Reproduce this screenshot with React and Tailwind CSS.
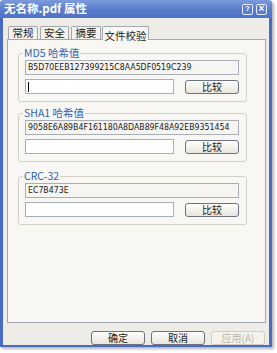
import React from 'react';

const cjk = { fontFamily: '"Noto Sans CJK SC", "Liberation Sans", sans-serif' };
const latin = { fontFamily: '"Liberation Sans", "Noto Sans CJK SC", sans-serif' };
const narrow = { fontFamily: '"Liberation Sans Narrow", "DejaVu Sans Condensed", "Liberation Sans", sans-serif' };

function HashField({ value, white, caret }) {
    return (
        <div
            className={`h-[15px] min-w-0 border border-[#A7AEB8] flex items-center pl-[2px] text-[8.7px] text-[#1a1a1a] overflow-hidden whitespace-nowrap ${white ? 'bg-white' : 'bg-[#F6F5F1]'}`}
            style={narrow}
        >
            {caret && <span className="w-px h-[10px] bg-black" />}
            {value}
        </div>
    );
}

function XpButton({ children, disabled, className = '' }) {
    return (
        <div
            className={`h-[14px] w-[54px] shrink-0 rounded-[3px] border flex items-center justify-center text-[10px] leading-none ${disabled
                ? 'border-[#CFCDC2] bg-[#F4F3EE] text-[#B9B6AA]'
                : 'border-[#6B7280] bg-gradient-to-b from-white to-[#E7E5DC] text-[#222]'} ${className}`}
            style={cjk}
        >
            {children}
        </div>
    );
}

function HashGroup({ label, value, className = '' }) {
    return (
        <fieldset className={`min-w-0 w-full border border-[#D3D1C6] rounded-[3px] pl-[6px] pr-[7px] pb-[7px] ${className}`}>
            <legend className="ml-[-2px] px-[1px] text-[10.5px] leading-[12px] text-[#3463B5]" style={cjk}>
                {label}
            </legend>
            <div className="pt-[1px] flex flex-col gap-[4px]">
                <HashField value={value} />
                <div className="flex items-center justify-between">
                    <div className="w-[149px]">
                        <HashField white caret={label.startsWith('MD5')} />
                    </div>
                    <XpButton>比较</XpButton>
                </div>
            </div>
        </fieldset>
    );
}

export default function App() {
    return (
        <div className="w-[277px] h-[353px] bg-white">
            <div className="w-[272px] h-[347px] flex flex-col rounded-t-[3px] overflow-hidden shadow-[2px_2px_3px_rgba(0,0,0,0.3)]">
                {/* Title bar */}
                <div className="h-[18px] shrink-0 bg-gradient-to-b from-[#7C9BDB] via-[#5B7FCC] to-[#4F73C5] flex items-center justify-between pl-[4px] pr-[5px]">
                    <span className="text-white font-bold text-[11.5px] leading-none" style={cjk}>无名称.pdf 属性</span>
                    <div className="flex gap-[3px]">
                        <div className="w-[11px] h-[11px] rounded-[2px] border border-[#E6ECF8] bg-[#5A80D2] flex items-center justify-center text-white text-[8px] font-bold leading-none" style={latin}>?</div>
                        <div className="w-[11px] h-[11px] rounded-[2px] border border-[#E6ECF8] bg-[#5A80D2] flex items-center justify-center text-white text-[10px] font-bold leading-none" style={latin}>×</div>
                    </div>
                </div>

                {/* Body */}
                <div className="flex-1 bg-[#EDECE6] border-x-[3px] border-b-[3px] border-[#4A6BC4] flex flex-col pl-[4px] pr-[3px]">
                    {/* Tabs */}
                    <div className="h-[17px] mt-[4px] flex items-end pl-[1px] text-[10.5px] text-[#222]" style={cjk}>
                        <div className="w-[30px] h-[13px] border border-b-0 border-[#A3A8B0] rounded-t-[2px] bg-[#F4F3EE] flex items-center justify-center">常规</div>
                        <div className="w-[29px] h-[13px] ml-[2px] border border-b-0 border-[#A3A8B0] rounded-t-[2px] bg-[#F4F3EE] flex items-center justify-center">安全</div>
                        <div className="w-[30px] h-[13px] ml-[2px] border border-b-0 border-[#A3A8B0] rounded-t-[2px] bg-[#F4F3EE] flex items-center justify-center">摘要</div>
                        <div className="w-[47px] h-[14px] ml-[1px] mb-[-1px] border border-b-0 border-[#A3A8B0] rounded-t-[2px] bg-[#F8F7F3] flex items-start justify-center pt-[1px] relative z-10">文件校验</div>
                    </div>

                    {/* Tab panel */}
                    <div className="h-[284px] border border-[#A3A8B0] bg-[#F8F7F3] pt-[7px] pl-[10px] pr-[18px]">
                        <HashGroup label="MD5 哈希值" value="B5D70EEB127399215C8AA5DF0519C239" />
                        <HashGroup label="SHA1 哈希值" value="9058E6A89B4F161180A8DAB89F48A92EB9351454" className="mt-[5px]" />
                        <HashGroup label="CRC-32" value="EC7B473E" className="mt-[8px]" />
                    </div>

                    {/* Dialog buttons */}
                    <div className="flex justify-end gap-[6px] mt-[8px] pr-[1px]">
                        <XpButton>确定</XpButton>
                        <XpButton>取消</XpButton>
                        <XpButton disabled>应用(A)</XpButton>
                    </div>
                </div>
            </div>
        </div>
    );
}
